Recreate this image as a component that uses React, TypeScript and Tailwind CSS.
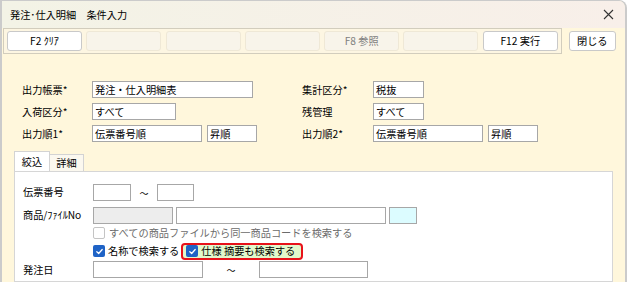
import React from 'react';

const Field: React.FC<{ w: string; value?: string; bg?: string }> = ({ w, value, bg = 'bg-white' }) => (
  <div className={`h-[17px] border border-[#a7a7a7] px-[2px] text-[10.2px] leading-[15px] text-black ${bg} ${w}`}>{value}</div>
);

const Check: React.FC<{ on?: boolean }> = ({ on }) =>
  on ? (
    <span className="flex h-[12px] w-[12px] items-center justify-center rounded-[2px] bg-[#1f63c6]">
      <svg width="9" height="9" viewBox="0 0 10 10" fill="none">
        <path d="M2 5.2 L4.1 7.2 L8 2.8" stroke="white" strokeWidth="1.4" strokeLinecap="round" strokeLinejoin="round" />
      </svg>
    </span>
  ) : (
    <span className="h-[12px] w-[12px] rounded-[2px] border border-[#c4c4c4] bg-white" />
  );

const ToolButton: React.FC<{ label?: string; active?: boolean; disabled?: boolean }> = ({ label, active, disabled }) => (
  <div
    className={`flex h-[20px] w-[75px] items-center justify-center rounded-[3px] border text-[10.2px] ${
      active ? 'border-[#c9c9c9] bg-white text-black' : 'border-[#efe8d6] bg-[#f8f4ea]'
    } ${disabled ? 'text-[#808080]' : ''}`}
  >
    {label}
  </div>
);

const App: React.FC = () => {
  return (
    <div className="flex h-[282px] w-[627px] flex-col overflow-hidden rounded-tr-[8px] border-l-2 border-r-2 border-t border-[#cbcbcb] bg-[#fff7dc] font-['Noto_Sans_CJK_JP','Noto_Sans',sans-serif] text-[10.2px] text-black">
      {/* title bar */}
      <div className="flex h-[27px] shrink-0 items-center justify-between bg-gradient-to-r from-[#f3f3e6] to-[#f8efe9] pl-[8px] pr-[10px]">
        <span>発注･仕入明細　条件入力</span>
        <svg width="11" height="11" viewBox="0 0 11 11" className="mr-[1px]">
          <path d="M1 1 L10 10 M10 1 L1 10" stroke="#333" strokeWidth="1.1" />
        </svg>
      </div>

      {/* toolbar */}
      <div className="flex shrink-0 items-center">
        <div className="ml-[1px] flex h-[26px] items-center gap-[4.3px] border border-[#d2cdbd] bg-[#fdf6e2] px-[3px]">
          <ToolButton label="F2 ｸﾘｱ" active />
          <ToolButton />
          <ToolButton />
          <ToolButton />
          <ToolButton label="F8 参照" disabled />
          <ToolButton />
          <ToolButton label="F12 実行" active />
        </div>
        <div className="ml-[7px] flex h-[20px] w-[47px] items-center justify-center rounded-[3px] border border-[#c9c9c9] bg-white">閉じる</div>
      </div>

      {/* header fields */}
      <div className="flex flex-col gap-[5px] pl-[20px] pt-[27px]">
        <div className="flex items-center">
          <div className="flex w-[280px] items-center">
            <span className="w-[70px]">出力帳票*</span>
            <Field w="w-[161px]" value="発注・仕入明細表" />
          </div>
          <span className="w-[71px]">集計区分*</span>
          <Field w="w-[51px]" value="税抜" />
        </div>
        <div className="flex items-center">
          <div className="flex w-[280px] items-center">
            <span className="w-[70px]">入荷区分*</span>
            <Field w="w-[84px]" value="すべて" />
          </div>
          <span className="w-[71px]">残管理</span>
          <Field w="w-[51px]" value="すべて" />
        </div>
        <div className="flex items-center">
          <div className="flex w-[280px] items-center">
            <span className="w-[70px]">出力順1*</span>
            <Field w="w-[110px]" value="伝票番号順" />
            <div className="w-[5px]" />
            <Field w="w-[50px]" value="昇順" />
          </div>
          <span className="w-[71px]">出力順2*</span>
          <Field w="w-[110px]" value="伝票番号順" />
          <div className="w-[5px]" />
          <Field w="w-[50px]" value="昇順" />
        </div>
      </div>

      {/* tabs */}
      <div className="ml-[12px] mt-[9px] flex items-end">
        <div className="flex h-[20px] w-[36px] items-center justify-center border border-b-0 border-[#d3d3d3] bg-white">絞込</div>
        <div className="flex h-[17px] w-[34px] items-center justify-center border border-b-0 border-l-0 border-[#d3d3d3] bg-[#fbf8ef]">詳細</div>
      </div>

      {/* tab panel */}
      <div className="ml-[12px] flex w-[599px] flex-1 flex-col border border-[#d6d6d6] bg-white pl-[8px] pt-[12px]">
        <div className="flex h-[16px] items-center">
          <span className="w-[70px]">伝票番号</span>
          <Field w="w-[38px] h-[16px]" />
          <span className="w-[26px] pt-[4px] text-center text-[9px]">～</span>
          <Field w="w-[37px] h-[16px]" />
        </div>
        <div className="mt-[7px] flex h-[16px] items-center">
          <span className="w-[70px]">商品/ﾌｧｲﾙNo</span>
          <Field w="w-[80px] h-[16px]" bg="bg-[#ededed]" />
          <div className="w-[3px]" />
          <Field w="w-[210px] h-[16px]" />
          <div className="w-[3px]" />
          <Field w="w-[28px] h-[16px]" bg="bg-[#dcfcff]" />
        </div>
        <div className="ml-[70px] mt-[3px] flex h-[13px] items-center gap-[4px] text-[#6b6b6b]">
          <Check />
          <span>すべての商品ファイルから同一商品コードを検索する</span>
        </div>
        <div className="ml-[70px] mt-[4px] flex h-[16px] items-center">
          <Check on />
          <span className="ml-[3px]">名称で検索する</span>
          <div className="ml-[2px] flex h-[17px] items-center gap-[3px] rounded-[4px] border-2 border-[#e8121a] bg-[#e2f8cb] pl-[3px] pr-[6px]">
            <Check on />
            <span>仕様 摘要も検索する</span>
          </div>
        </div>
        <div className="mt-[2px] flex h-[17px] items-center">
          <span className="w-[70px]">発注日</span>
          <Field w="w-[110px]" />
          <span className="w-[56px] pt-[3px] text-center text-[9px]">～</span>
          <Field w="w-[109px]" />
        </div>
      </div>
    </div>
  );
};

export default App;
